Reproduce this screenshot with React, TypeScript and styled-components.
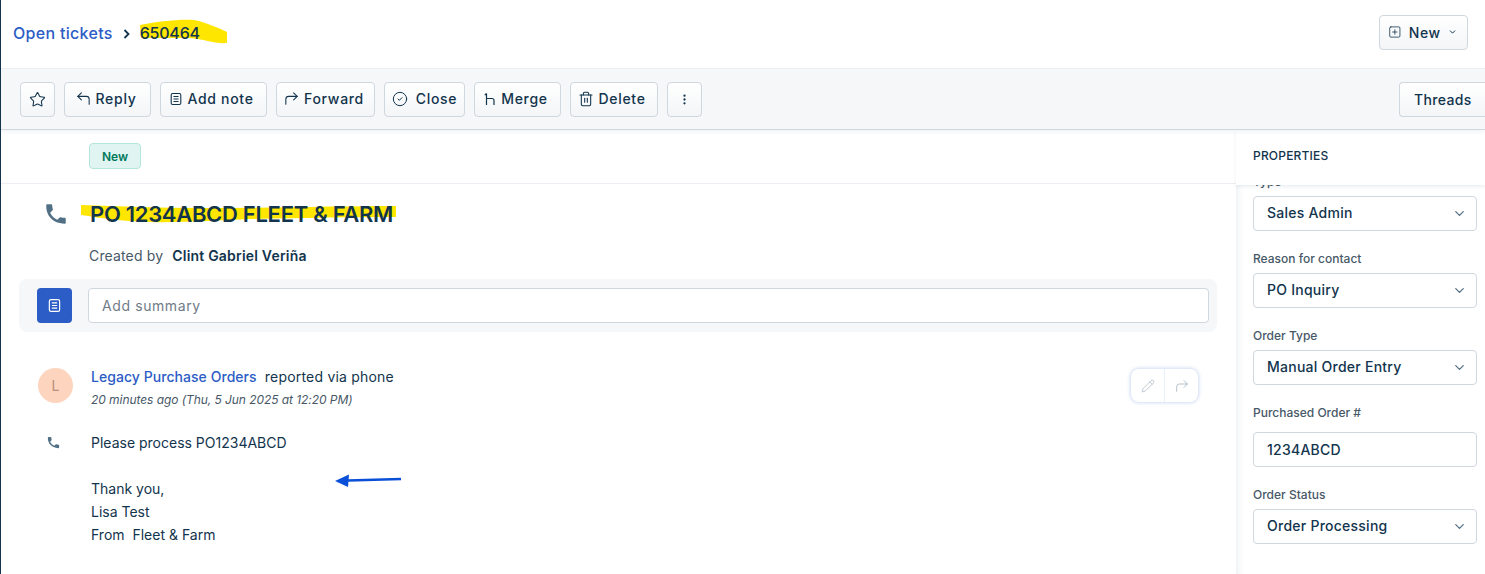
import React from 'react'
import styled, { createGlobalStyle } from 'styled-components'
import {
  ChevronDown,
  CircleCheck,
  CornerUpLeft,
  CornerUpRight,
  EllipsisVertical,
  Pencil,
  SquarePlus,
  Star,
  Trash2
} from 'lucide-react'

const PHONE_PATH =
  'M6.62 10.79c1.44 2.83 3.76 5.14 6.59 6.59l2.2-2.2c.27-.27.67-.36 1.02-.24 1.12.37 2.33.57 3.57.57.55 0 1 .45 1 1V20c0 .55-.45 1-1 1-1.5 0-3-.2-4.4-.6C9 18.700 5.300 15 3.600 9.400 3.200 8 3 6.500 3 5V4c0-.55.45-1 1-1h3.500c.55 0 1 .45 1 1 0 1.250.2 2.450.57 3.570.11.35.03.74-.25 1.020l-2.200 2.200z'

const NoteIcon: React.FC<{ size?: number }> = ({ size = 14 }) => (
  <svg width={size} height={size} viewBox="0 0 14 14" fill="none" stroke="currentColor" strokeWidth="1.1">
    <rect x="2.2" y="1.5" width="9.600" height="11" rx="1.500" />
    <path d="M4.500 4.500h5M4.500 7h5M4.500 9.500h5" />
  </svg>
)

const MergeIcon: React.FC = () => (
  <svg width="14" height="14" viewBox="0 0 14 14" fill="none" stroke="currentColor" strokeWidth="1.2">
    <path d="M3.500 13V1.500M1.800 3.200 3.500 1.500M3.500 6.500h5.500a2 2 0 0 1 2 2V13" />
  </svg>
)

const PhoneIcon: React.FC<{ size: number }> = ({ size }) => (
  <svg width={size} height={size} viewBox="0 0 24 24" fill="#527085">
    <path d={PHONE_PATH} />
  </svg>
)

const fields = [
  { label: 'Reason for contact', value: 'PO Inquiry' },
  { label: 'Order Type', value: 'Manual Order Entry' }
]

const App: React.FC = () => {
  return (
    <Page>
      <GlobalStyle />
      <TopBar>
        <Crumbs>
          <CrumbLink>Open tickets</CrumbLink>
          <CrumbArrow>
            <svg width="8" height="10" viewBox="0 0 8 10" fill="none" stroke="#12344d" strokeWidth="1.800">
              <path d="M1.500 1 5.500 5 1.500 9" />
            </svg>
          </CrumbArrow>
          <TicketId>
            <CrumbSwash width="90" height="26" viewBox="0 0 90 26">
              <path d="M1 6C20 2 50 -1 60 2C70 5 80 9 88 13L88 24C75 25 66 20 50 19L2 19Z" fill="#ffe600" />
            </CrumbSwash>
            650464
          </TicketId>
        </Crumbs>
        <NewButton>
          <SquarePlus size={18} strokeWidth={1.4} />
          New
          <ChevronDown size={12} strokeWidth={2.6} />
        </NewButton>
      </TopBar>

      <Toolbar>
        <ToolGroup>
          <IconButton><Star size={17} strokeWidth={1.5} /></IconButton>
          <ToolButton $width={87}><CornerUpLeft size={17} strokeWidth={1.5} />Reply</ToolButton>
          <ToolButton $width={107}><NoteIcon />Add note</ToolButton>
          <ToolButton $width={99}><CornerUpRight size={17} strokeWidth={1.5} />Forward</ToolButton>
          <ToolButton $width={81} $gap={8} $trail={0}><CircleCheck size={16} strokeWidth={1.5} />Close</ToolButton>
          <ToolButton $width={87}><MergeIcon />Merge</ToolButton>
          <ToolButton $width={88}><Trash2 size={16} strokeWidth={1.6} />Delete</ToolButton>
          <IconButton><EllipsisVertical size={13} strokeWidth={2.2} /></IconButton>
        </ToolGroup>
        <ThreadsButton>Threads</ThreadsButton>
      </Toolbar>

      <Body>
        <Main>
          <StatusRow>
            <Badge>New</Badge>
          </StatusRow>
          <TitleRow>
            <TitleIcon><PhoneIcon size={26} /></TitleIcon>
            <Title>
              <TitleSwash width="318" height="19" viewBox="0 0 318 19">
                <path d="M1 1C40 2 80 4 120 4C190 4 260 2 316 2L316 13C270 13 220 14 170 15C140 16 100 19 70 18C40 17 20 14 1 11Z" fill="#ffe600" />
              </TitleSwash>
              PO 1234ABCD FLEET &amp; FARM
            </Title>
          </TitleRow>
          <CreatedBy>
            Created by <strong>Clint Gabriel Veriña</strong>
          </CreatedBy>
          <SummaryBox>
            <SummaryIcon><NoteIcon size={15} /></SummaryIcon>
            <SummaryInput placeholder="Add summary" readOnly />
          </SummaryBox>
          <Message>
            <MessageHead>
              <Avatar>L</Avatar>
              <MessageMeta>
                <MessageFrom>
                  <SenderLink>Legacy Purchase Orders</SenderLink> reported via phone
                </MessageFrom>
                <MessageTime>20 minutes ago (Thu, 5 Jun 2025 at 12:20 PM)</MessageTime>
              </MessageMeta>
              <MessageActions>
                <MessageAction><Pencil size={14} strokeWidth={1.2} /></MessageAction>
                <MessageAction><CornerUpRight size={16} strokeWidth={1.2} /></MessageAction>
              </MessageActions>
            </MessageHead>
            <MessageBody>
              <MessageIcon><PhoneIcon size={15} /></MessageIcon>
              <MessageText>
                <p>Please process PO1234ABCD</p>
                <p>&nbsp;</p>
                <p>Thank you,</p>
                <p>Lisa Test</p>
                <p>From&nbsp; Fleet &amp; Farm</p>
                <BlueArrow width="68" height="16" viewBox="0 0 68 16">
                  <path d="M67 7 14 8.500" stroke="#0a4fd8" strokeWidth="2.500" fill="none" />
                  <path d="M1 9 15 2.500 14 15Z" fill="#0a4fd8" />
                </BlueArrow>
              </MessageText>
            </MessageBody>
          </Message>
        </Main>

        <Sidebar>
          <SidebarHeader>PROPERTIES</SidebarHeader>
          <FieldList>
            <ClippedLabel>Type</ClippedLabel>
            <SelectBox>Sales Admin<ChevronDown size={15} strokeWidth={2} /></SelectBox>
            {fields.map((field) => (
              <React.Fragment key={field.label}>
                <FieldLabel>{field.label}</FieldLabel>
                <SelectBox>{field.value}<ChevronDown size={15} strokeWidth={2} /></SelectBox>
              </React.Fragment>
            ))}
            <FieldLabel>Purchased Order #</FieldLabel>
            <TextBox>1234ABCD</TextBox>
            <FieldLabel>Order Status</FieldLabel>
            <SelectBox>Order Processing<ChevronDown size={15} strokeWidth={2} /></SelectBox>
          </FieldList>
        </Sidebar>
      </Body>
    </Page>
  )
}

export default App

const GlobalStyle = createGlobalStyle`
  html, body {
    margin: 0;
    padding: 0;
    background: #fff;
    overflow: hidden;
  }
  * {
    box-sizing: border-box;
  }
  body {
    font-family: Inter, "Noto Sans", "Liberation Sans", sans-serif;
    color: #12344d;
  }
`

const Page = styled.div`
  border-left: 1px solid #12344d;
  display: flex;
  flex-direction: column;
  height: 574px;
  overflow: hidden;
  width: 1485px;
`

const TopBar = styled.header`
  align-items: center;
  display: flex;
  flex: 0 0 68px;
  justify-content: space-between;
  padding: 0 17px 3px 12px;
`
const Crumbs = styled.div`
  align-items: center;
  display: flex;
  font-size: 16px;
  font-weight: 500;
`
const CrumbLink = styled.span`
  color: #2c5cc5;
  letter-spacing: 0.3px;
`
const CrumbArrow = styled.span`
  display: flex;
  margin: 2px 9px 0 10px;
`
const TicketId = styled.span`
  isolation: isolate;
  letter-spacing: -0.2px;
  position: relative;
`
const CrumbSwash = styled.svg`
  left: -1px;
  position: absolute;
  top: -4px;
  z-index: -1;
`

const buttonBase = `
  align-items: center;
  background: linear-gradient(180deg, #fff 0%, #f3f5f7 100%);
  border: 1px solid #cfd7df;
  border-radius: 4px;
  color: #12344d;
  display: flex;
  font-family: inherit;
  font-size: 14px;
  font-weight: 500;
  height: 35px;
  letter-spacing: 0.7px;
  padding-bottom: 2px;
`
const NewButton = styled.button`
  ${buttonBase}
  gap: 7px;
  padding: 0 10px 1px 8px;
  width: 89px;
`

const Toolbar = styled.div`
  align-items: center;
  background: #f5f7f9;
  border-bottom: 1px solid #cfd7df;
  border-top: 1px solid #ebeff3;
  display: flex;
  flex: 0 0 62px;
  justify-content: space-between;
  padding: 0 0 0 19px;
  position: relative;
  z-index: 2;
  box-shadow: 0 2px 4px rgba(18, 52, 77, 0.06);
`
const ToolGroup = styled.div`
  align-items: center;
  display: flex;
  gap: 9px;
`
const IconButton = styled.button`
  ${buttonBase}
  justify-content: center;
  padding: 0;
  width: 35px;
`
const ToolButton = styled.button<{ $width: number; $gap?: number; $trail?: number }>`
  ${buttonBase}
  gap: ${(p) => p.$gap ?? 4}px;
  justify-content: center;
  padding-left: 0;
  padding-right: ${(p) => p.$trail ?? 4}px;
  width: ${(p) => p.$width}px;
`
const ThreadsButton = styled.button`
  ${buttonBase}
  border-radius: 4px 0 0 4px;
  border-right: none;
  flex: 0 0 86px;
  letter-spacing: 0.35px;
  padding: 0 0 0 14px;
`

const Body = styled.div`
  display: flex;
  flex: 1;
  min-height: 0;
`
const Main = styled.main`
  display: flex;
  flex: 0 0 1235px;
  flex-direction: column;
`
const StatusRow = styled.div`
  border-bottom: 1px solid #ebeff3;
  flex: 0 0 54px;
  padding: 13px 0 0 88px;
`
const Badge = styled.span`
  align-items: center;
  background: #e0f5f1;
  border: 1px solid #b4e5da;
  border-radius: 4px;
  color: #00795b;
  display: inline-flex;
  font-size: 12px;
  font-weight: 600;
  height: 26px;
  justify-content: center;
  width: 52px;
`
const TitleRow = styled.div`
  align-items: center;
  display: flex;
  margin-top: 16px;
  padding-left: 42px;
`
const TitleIcon = styled.span`
  display: flex;
  width: 47px;
`
const Title = styled.h1`
  font-size: 22px;
  font-weight: 600;
  isolation: isolate;
  letter-spacing: -0.3px;
  line-height: 28px;
  margin: 0;
  position: relative;
`
const TitleSwash = styled.svg`
  left: -10px;
  position: absolute;
  top: 4px;
  z-index: -1;
`
const CreatedBy = styled.div`
  color: #475867;
  font-size: 14px;
  letter-spacing: 0.15px;
  line-height: 20px;
  margin-top: 18px;
  padding-left: 88px;

  strong {
    color: #12344d;
    font-weight: 600;
    letter-spacing: 0.2px;
    margin-left: 5px;
  }
`
const SummaryBox = styled.div`
  align-items: center;
  background: #f5f7f9;
  border-radius: 8px;
  display: flex;
  gap: 16px;
  height: 53px;
  margin: 13px 19px 0 18px;
  padding: 0 8px 0 18px;
`
const SummaryIcon = styled.span`
  align-items: center;
  background: #2c5cc5;
  border-radius: 4px;
  color: #fff;
  display: flex;
  flex: 0 0 35px;
  height: 35px;
  justify-content: center;
`
const SummaryInput = styled.input`
  border: 1px solid #cfd7df;
  border-radius: 4px;
  flex: 1;
  font-family: inherit;
  font-size: 14px;
  height: 35px;
  letter-spacing: 0.6px;
  outline: none;
  padding: 0 13px;

  &::placeholder {
    color: #6f7c87;
    opacity: 1;
  }
`
const Message = styled.section`
  margin-top: 36px;
  padding-left: 37px;
`
const MessageHead = styled.div`
  display: flex;
  padding-right: 38px;
`
const Avatar = styled.span`
  align-items: center;
  background: #fdd5bf;
  border-radius: 50%;
  color: #b98f7c;
  display: flex;
  flex: 0 0 35px;
  font-size: 14px;
  height: 35px;
  justify-content: center;
`
const MessageMeta = styled.div`
  flex: 1;
  padding-left: 18px;
`
const MessageFrom = styled.div`
  font-size: 14px;
  letter-spacing: 0.2px;
  line-height: 20px;
  margin-top: -1px;
`
const SenderLink = styled.span`
  color: #2c5cc5;
  font-weight: 500;
  letter-spacing: 0.05px;
  margin-right: 4px;
`
const MessageTime = styled.div`
  color: #475867;
  font-size: 12px;
  font-style: italic;
  letter-spacing: -0.06px;
  line-height: 16px;
  margin-top: 5px;
`
const MessageActions = styled.div`
  border-radius: 8px;
  box-shadow: 0 0 4px rgba(44, 92, 197, 0.35);
  display: flex;
  height: 33px;
  margin-top: 1px;
  width: 67px;
`
const MessageAction = styled.span`
  align-items: center;
  color: #a6b3bd;
  display: flex;
  flex: 1;
  justify-content: center;

  & + & {
    border-left: 1px solid #e6f0fa;
  }
`
const MessageBody = styled.div`
  display: flex;
  margin-top: 23px;
`
const MessageIcon = styled.span`
  display: flex;
  flex: 0 0 53px;
  padding: 4px 0 0 8px;
`
const MessageText = styled.div`
  font-size: 14px;
  line-height: 23px;
  position: relative;

  p {
    margin: 0;
  }
`
const BlueArrow = styled.svg`
  left: 243px;
  position: absolute;
  top: 41px;
`

const Sidebar = styled.aside`
  box-shadow: inset 8px 0 8px -8px rgba(18, 52, 77, 0.12);
  display: flex;
  flex: 1;
  flex-direction: column;
`
const SidebarHeader = styled.div`
  align-items: center;
  background: #fff;
  box-shadow: 0 2px 3px rgba(18, 52, 77, 0.08);
  color: #12344d;
  display: flex;
  flex: 0 0 55px;
  font-size: 12px;
  font-weight: 500;
  letter-spacing: 0.2px;
  padding: 0 0 4px 17px;
  position: relative;
  z-index: 1;
`
const FieldList = styled.div`
  display: flex;
  flex: 1;
  flex-direction: column;
  overflow: hidden;
  padding: 0 8px 0 17px;
`
const ClippedLabel = styled.label`
  color: #475867;
  font-size: 12px;
  font-weight: 500;
  height: 11px;
  line-height: 16px;
  margin-top: -11px;
  margin-bottom: 11px;
`
const FieldLabel = styled.label`
  color: #475867;
  font-size: 12px;
  font-weight: 500;
  line-height: 16px;
  margin: 20px 0 6px;
`
const controlBase = `
  align-items: center;
  border: 1px solid #cfd7df;
  border-radius: 4px;
  color: #12344d;
  display: flex;
  flex: 0 0 35px;
  font-size: 14px;
  font-weight: 500;
  letter-spacing: 0.25px;
`
const SelectBox = styled.div`
  ${controlBase}
  justify-content: space-between;
  padding: 0 9px 2px 13px;

  svg {
    color: #527085;
    margin-top: 2px;
  }
`
const TextBox = styled.div`
  ${controlBase}
  margin-top: 5px;
  padding: 0 13px;
`
